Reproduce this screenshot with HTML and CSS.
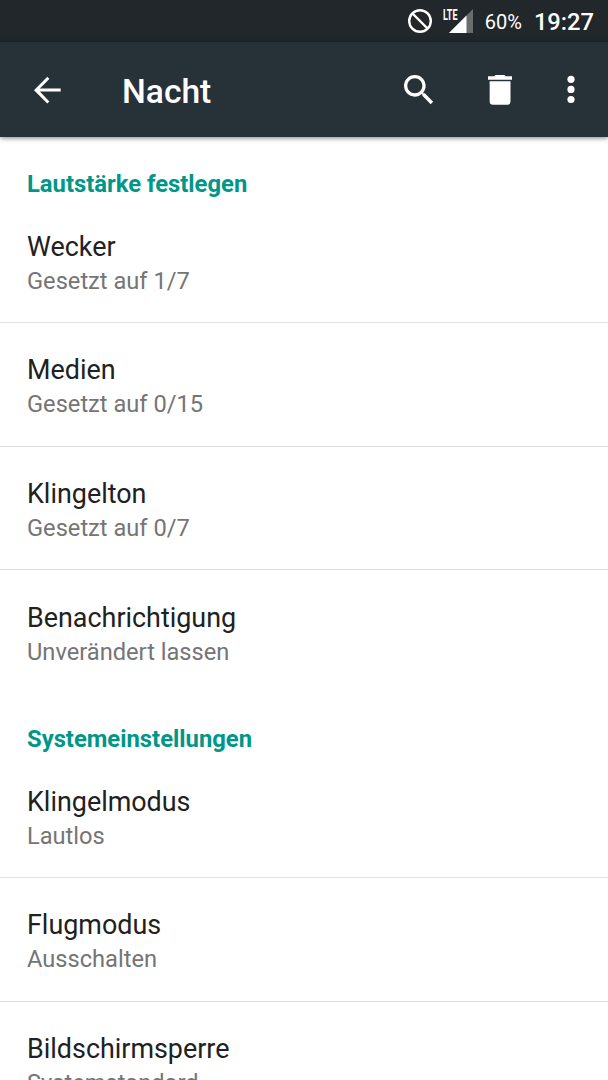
FILE: index.html
```html
<!DOCTYPE html>
<html lang="de">
<head>
  <meta charset="UTF-8" />
  <meta name="viewport" content="width=device-width, initial-scale=1" />
  <title>Nacht</title>
  <link rel="stylesheet" href="styles.css">
</head>
<body>
  <div class="status-bar">
    <svg class="icon-blocked" width="26" height="26" viewBox="0 0 26 26">
      <circle cx="13" cy="13" r="10.8" fill="none" stroke="#fff" stroke-width="2.4" />
      <path d="M5.500 5.500l15 15" stroke="#fff" stroke-width="2.400" />
    </svg>
    <div class="signal">
      <span class="lte">LTE</span>
      <svg width="24" height="24" viewBox="0 0 24 24">
        <path d="M24 0v24H0z" fill="#6b6c6c" />
        <path d="M17.500 6.500v17.500H0z" fill="#fff" />
      </svg>
    </div>
    <span class="battery">60%</span>
    <span class="clock">19:27</span>
  </div>

  <header class="toolbar">
    <svg class="back" width="40" height="40" viewBox="0 0 24 24">
      <path d="M20.200 11.100H7.700l5.700-5.700L12.200 4.100l-8 8 8 8 1.200-1.200L7.700 12.900h12.500z" fill="#fff" />
    </svg>
    <h1>Nacht</h1>
    <svg class="search" width="40" height="40" viewBox="0 0 24 24">
      <path d="M15.500 14h-.79l-.28-.27C15.410 12.590 16 11.110 16 9.500 16 5.910 13.090 3 9.500 3S3 5.910 3 9.500 5.910 16 9.500 16c1.610 0 3.090-.59 4.230-1.570l.27.28v.79l5 4.990L20.490 19l-4.990-5zm-6 0C7.010 14 5 11.990 5 9.500S7.010 5 9.500 5 14 7.010 14 9.500 11.990 14 9.500 14z" fill="#fff" />
    </svg>
    <svg class="trash" width="40" height="40" viewBox="0 0 24 24">
      <path d="M5.800 6.700h12.500v12.200q0 2-2 2H7.800q-2 0-2-2zM4.800 3.800h3.800l.8-.8h5.200l.8.800h3.800V5.900H4.800z" fill="#fff" />
    </svg>
    <svg class="more" width="40" height="40" viewBox="0 0 40 40">
      <circle cx="20" cy="9.300" r="3.600" fill="#fff" />
      <circle cx="20" cy="19.400" r="3.600" fill="#fff" />
      <circle cx="20" cy="29.500" r="3.600" fill="#fff" />
    </svg>
  </header>

  <main class="settings">
    <h2>Lautstärke festlegen</h2>
    <ul>
      <li><p class="name">Wecker</p><p class="value">Gesetzt auf 1/7</p></li>
      <li><p class="name">Medien</p><p class="value">Gesetzt auf 0/15</p></li>
      <li><p class="name">Klingelton</p><p class="value">Gesetzt auf 0/7</p></li>
      <li><p class="name">Benachrichtigung</p><p class="value">Unverändert lassen</p></li>
    </ul>
    <h2>Systemeinstellungen</h2>
    <ul>
      <li><p class="name">Klingelmodus</p><p class="value">Lautlos</p></li>
      <li><p class="name">Flugmodus</p><p class="value">Ausschalten</p></li>
      <li><p class="name">Bildschirmsperre</p><p class="value">Systemstandard</p></li>
    </ul>
  </main>
</body>
</html>
```
FILE: styles.css
```css
* {
  box-sizing: border-box;
}

body {
  margin: 0;
  height: 1080px;
  overflow: hidden;
  display: flex;
  flex-direction: column;
  font-family: Roboto, "Liberation Sans", sans-serif;
  background-color: #fff;
  color: #212121;
}

.status-bar {
  flex: none;
  height: 42px;
  display: flex;
  align-items: center;
  justify-content: flex-end;
  padding-right: 14px;
  background-color: #21272b;
  color: #fff;
}

.signal {
  position: relative;
  width: 30px;
  height: 24px;
  margin-left: 10px;
}

.signal svg {
  display: block;
  margin-left: auto;
}

.lte {
  position: absolute;
  left: 0;
  top: -1px;
  font-size: 14.5px;
  line-height: 15px;
  font-weight: bold;
  transform: scaleX(0.62);
  transform-origin: left;
}

.battery {
  margin-left: 12px;
  padding-top: 2px;
  font-size: 20px;
}

.clock {
  margin-left: 12px;
  padding-top: 2px;
  font-size: 23.7px;
  font-weight: 500;
}

.toolbar {
  flex: none;
  position: relative;
  height: 95px;
  display: flex;
  align-items: center;
  background-color: #263238;
  box-shadow: 0 1px 5px rgba(0, 0, 0, 0.5);
}

.back {
  margin-left: 27px;
}

h1 {
  flex: 1;
  margin: 3px 0 0 55px;
  color: #fff;
  font-size: 33.6px;
  font-weight: 500;
}

.trash {
  margin-left: 41px;
}

.more {
  margin-left: 31px;
  margin-right: 17px;
}

.settings {
  flex: none;
}

h2 {
  margin: 0;
  padding: 32px 27px 0;
  color: #009688;
  font-size: 23.8px;
  line-height: 30px;
  font-weight: bold;
}

ul + h2 {
  padding-top: 30px;
}

ul {
  margin: 0;
  padding: 0;
  list-style: none;
}

li {
  height: 123.8px;
  padding: 30.5px 27px 0;
  border-bottom: 1px solid #e0e0e0;
}

li:last-child {
  border-bottom: none;
}

.name,
.value {
  margin: 0;
  white-space: nowrap;
}

.name {
  font-size: 26.9px;
  line-height: 34px;
}

.value {
  color: #757575;
  font-size: 23.65px;
  line-height: 34px;
}
```
